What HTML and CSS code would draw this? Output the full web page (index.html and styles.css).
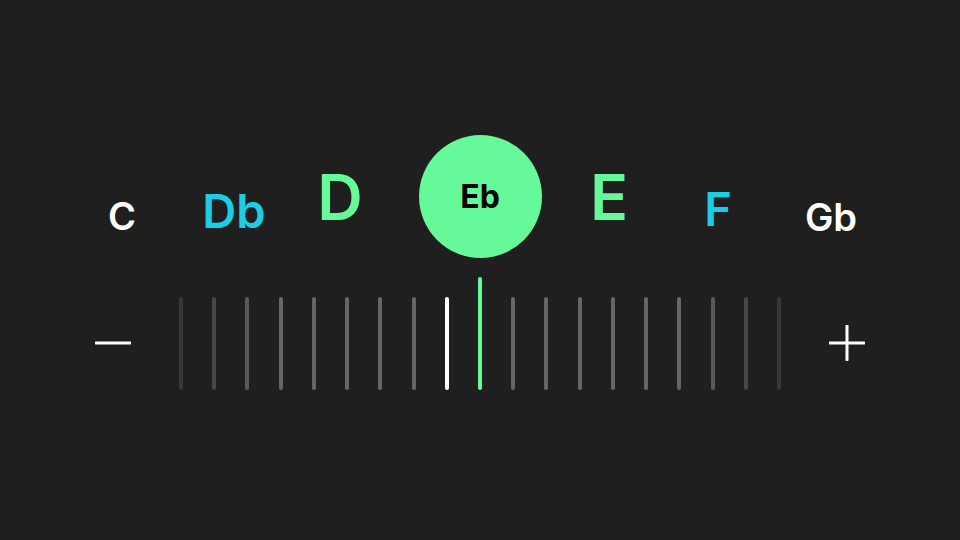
FILE: index.html
```html
<!DOCTYPE html>
<html lang="en">
<head>
    <meta charset="UTF-8">
    <meta name="viewport" content="width=device-width, initial-scale=1.0">
    <title>Tuner</title>
    <link rel="stylesheet" href="styles.css">
</head>
<body>
    <div class="tuner">
        <div class="notes">
            <span class="note far">C</span>
            <span class="note near up-1">Db</span>
            <span class="note close">D</span>
            <div class="current"><span>Eb</span></div>
            <span class="note close">E</span>
            <span class="note near up-2">F</span>
            <span class="note far down">Gb</span>
        </div>
        <div class="meter">
            <svg class="step" width="36" height="36" viewBox="0 0 36 36">
                <line x1="1" y1="18" x2="35" y2="18" stroke="#fff" stroke-width="3" stroke-linecap="round"/>
            </svg>
            <div class="ticks">
                <i class="tick t0"></i>
                <i class="tick t1"></i>
                <i class="tick t2"></i>
                <i class="tick"></i>
                <i class="tick"></i>
                <i class="tick"></i>
                <i class="tick"></i>
                <i class="tick"></i>
                <i class="tick played"></i>
                <i class="tick target"></i>
                <i class="tick"></i>
                <i class="tick"></i>
                <i class="tick"></i>
                <i class="tick"></i>
                <i class="tick"></i>
                <i class="tick"></i>
                <i class="tick t2"></i>
                <i class="tick t1"></i>
                <i class="tick t0"></i>
            </div>
            <svg class="step" width="36" height="36" viewBox="0 0 36 36">
                <line x1="1" y1="18" x2="35" y2="18" stroke="#fff" stroke-width="3" stroke-linecap="round"/>
                <line x1="18" y1="1" x2="18" y2="35" stroke="#fff" stroke-width="3" stroke-linecap="round"/>
            </svg>
        </div>
    </div>
</body>
</html>
```

FILE: styles.css
```css
body {
    margin: 0;
    background-color: #1f1f1f;
    font-family: 'Inter', 'Noto Sans', sans-serif;
    font-weight: 600;
    color: #fff;
}
.tuner {
    width: 960px;
    height: 540px;
    padding-top: 135px;
    box-sizing: border-box;
}
.notes {
    display: grid;
    grid-template-columns: 112px 112px 100px 180px 78px 140px 86px;
    margin-left: 66px;
    height: 123px;
    align-items: start;
}
.note {
    justify-self: center;
    line-height: 1;
}
.note.far {
    font-size: 38px;
    color: #ffffff;
    margin-top: 62px;
}
.note.far.down {
    margin-top: 63px;
}
.note.near {
    font-size: 47px;
    color: #1ccde6;
}
.note.up-1 {
    margin-top: 52px;
}
.note.up-2 {
    margin-top: 50px;
}
.note.close {
    font-size: 63px;
    color: #66f99a;
    margin-top: 31px;
}
.current {
    justify-self: center;
    width: 123px;
    height: 123px;
    border-radius: 50%;
    background-color: #66f99a;
    display: flex;
    justify-content: center;
    align-items: center;
    color: #050505;
    font-size: 32px;
    font-weight: 700;
    line-height: 1;
}
.meter {
    display: flex;
    align-items: flex-start;
    gap: 48px;
    margin-top: 19px;
    padding-left: 95px;
}
.step {
    display: block;
    margin-top: 48px;
}
.ticks {
    width: 602px;
    height: 113px;
    display: flex;
    justify-content: space-between;
    align-items: flex-end;
}
.tick {
    display: block;
    width: 4px;
    height: 93px;
    border-radius: 2px;
    background-color: #666;
}
.tick.t0 {
    background-color: #383838;
}
.tick.t1 {
    background-color: #474747;
}
.tick.t2 {
    background-color: #5a5a5a;
}
.tick.played {
    background-color: #fff;
}
.tick.target {
    height: 113px;
    background-color: #66f99a;
}
```
